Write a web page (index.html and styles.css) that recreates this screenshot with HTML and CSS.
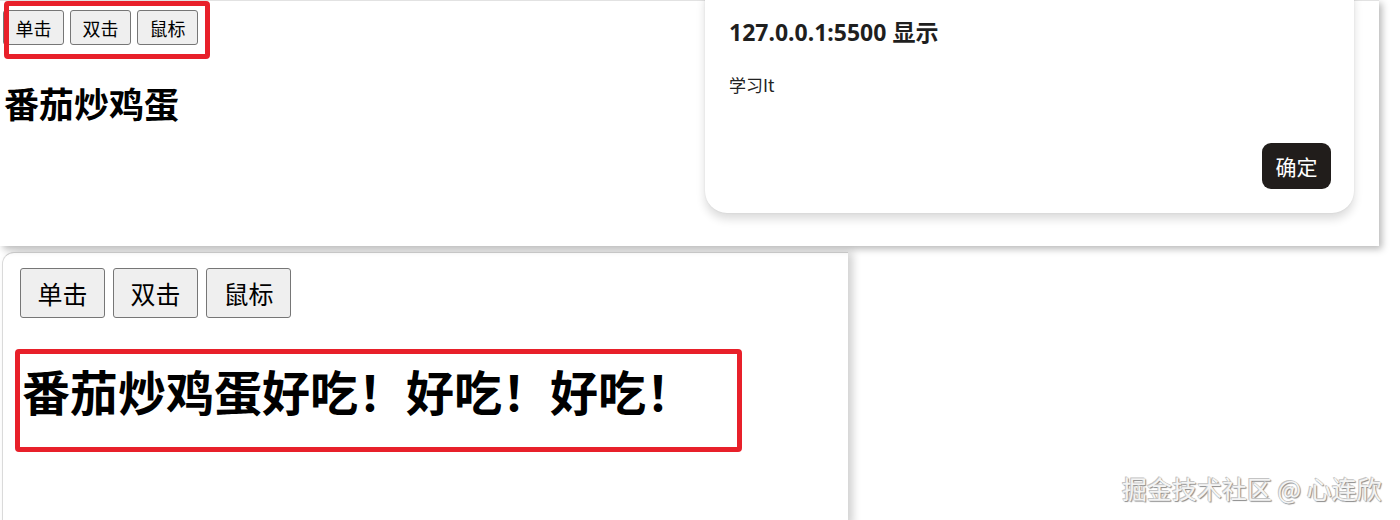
FILE: index.html
```html
<!DOCTYPE html>
<html lang="zh-CN">
<head>
<meta charset="utf-8">
<title>番茄炒鸡蛋</title>
<link rel="stylesheet" href="styles.css">
</head>
<body>
<div class="stage">
  <section class="shot shot-top">
    <div class="btn-row small">
      <button class="btn">单击</button>
      <button class="btn">双击</button>
      <button class="btn">鼠标</button>
    </div>
    <h2 class="title small">番茄炒鸡蛋</h2>
    <div class="mark mark-top"></div>
    <div class="dialog">
      <div class="dialog-title">127.0.0.1:5500 显示</div>
      <div class="dialog-msg">学习It</div>
      <div class="dialog-actions"><button class="ok">确定</button></div>
    </div>
  </section>
  <section class="shot shot-bottom">
    <div class="btn-row large">
      <button class="btn">单击</button>
      <button class="btn">双击</button>
      <button class="btn">鼠标</button>
    </div>
    <h2 class="title large">番茄炒鸡蛋好吃！好吃！好吃！</h2>
    <div class="mark mark-bottom"></div>
  </section>
  <div class="watermark">掘金技术社区 @ 心连欣</div>
</div>
</body>
</html>
```
FILE: styles.css
```css
* { box-sizing: border-box; }
html, body {
  margin: 0;
  padding: 0;
  background: #ffffff;
}
body {
  font-family: "Noto Sans CJK SC", "Noto Sans", sans-serif;
  color: #000;
  overflow: hidden;
}
.stage {
  position: relative;
  width: 1400px;
  height: 520px;
  overflow: hidden;
}
.shot {
  position: relative;
  background: #fff;
}
.shot-top {
  width: 1379px;
  height: 246px;
  border-top: 1px solid #e2e2e2;
  box-shadow: 3px 3px 7px rgba(0, 0, 0, 0.28);
  z-index: 2;
}
.shot-bottom {
  width: 846px;
  height: 274px;
  margin-left: 2px;
  margin-top: 6px;
  border-left: 1px solid #dadada;
  border-top: 1px solid #d0d0d0;
  border-top-left-radius: 12px;
  box-shadow: 5px 0 8px rgba(0, 0, 0, 0.18);
}
.btn-row {
  display: flex;
}
.btn {
  font-family: "Noto Sans CJK SC", sans-serif;
  background: #efefef;
  border: 1px solid #767676;
  border-radius: 3px;
  color: #000;
  padding: 0;
  line-height: 1;
}
.btn-row.small {
  padding: 9px 0 0 3px;
  gap: 6px;
}
.btn-row.small .btn {
  width: 61px;
  height: 35px;
  font-size: 18px;
}
.btn-row.large {
  padding: 15px 0 0 17px;
  gap: 8px;
}
.btn-row.large .btn {
  width: 85px;
  height: 50px;
  font-size: 25px;
}
.title {
  margin: 0;
  font-weight: 700;
}
.title.small {
  font-size: 35px;
  line-height: 41px;
  margin-top: 37px;
  padding-left: 4px;
}
.title.large {
  font-size: 48px;
  line-height: 56px;
  margin-top: 44px;
  padding-left: 19px;
}
.mark {
  position: absolute;
  border: 5px solid #e8202a;
  border-radius: 4px;
}
.mark-top {
  left: 4px;
  top: 0;
  width: 206px;
  height: 58px;
}
.mark-bottom {
  left: 12px;
  top: 96px;
  width: 727px;
  height: 103px;
}
.dialog {
  position: absolute;
  left: 705px;
  top: -22px;
  width: 649px;
  height: 234px;
  background: #fff;
  border-radius: 22px;
  box-shadow: 0 6px 10px rgba(0, 0, 0, 0.14), 0 0 2px rgba(0, 0, 0, 0.08);
  padding: 38px 23px 0 24px;
  display: flex;
  flex-direction: column;
}
.dialog-title {
  font-family: "Noto Sans", "Noto Sans CJK SC", sans-serif;
  font-weight: 700;
  font-size: 23px;
  line-height: 30px;
  color: #1f1f1f;
}
.dialog-msg {
  margin-top: 26px;
  font-family: "Noto Sans CJK SC", sans-serif;
  font-size: 17px;
  line-height: 24px;
  color: #222;
}
.dialog-actions {
  display: flex;
  justify-content: flex-end;
  margin-top: 46px;
}
.ok {
  width: 69px;
  height: 46px;
  background: #211d1b;
  color: #fff;
  border: none;
  border-radius: 9px;
  font-family: "Noto Sans CJK SC", sans-serif;
  font-size: 21px;
  padding: 0;
}
.watermark {
  position: absolute;
  left: 1122px;
  top: 471px;
  font-family: "Noto Sans CJK SC", sans-serif;
  font-size: 25px;
  line-height: 34px;
  color: #f4f4f4;
  text-shadow: -1px -1px 0 #c4c4c4, 1px 1px 1px #8a8a8a, 0 0 1px #9a9a9a;
  white-space: nowrap;
  z-index: 3;
}
```
